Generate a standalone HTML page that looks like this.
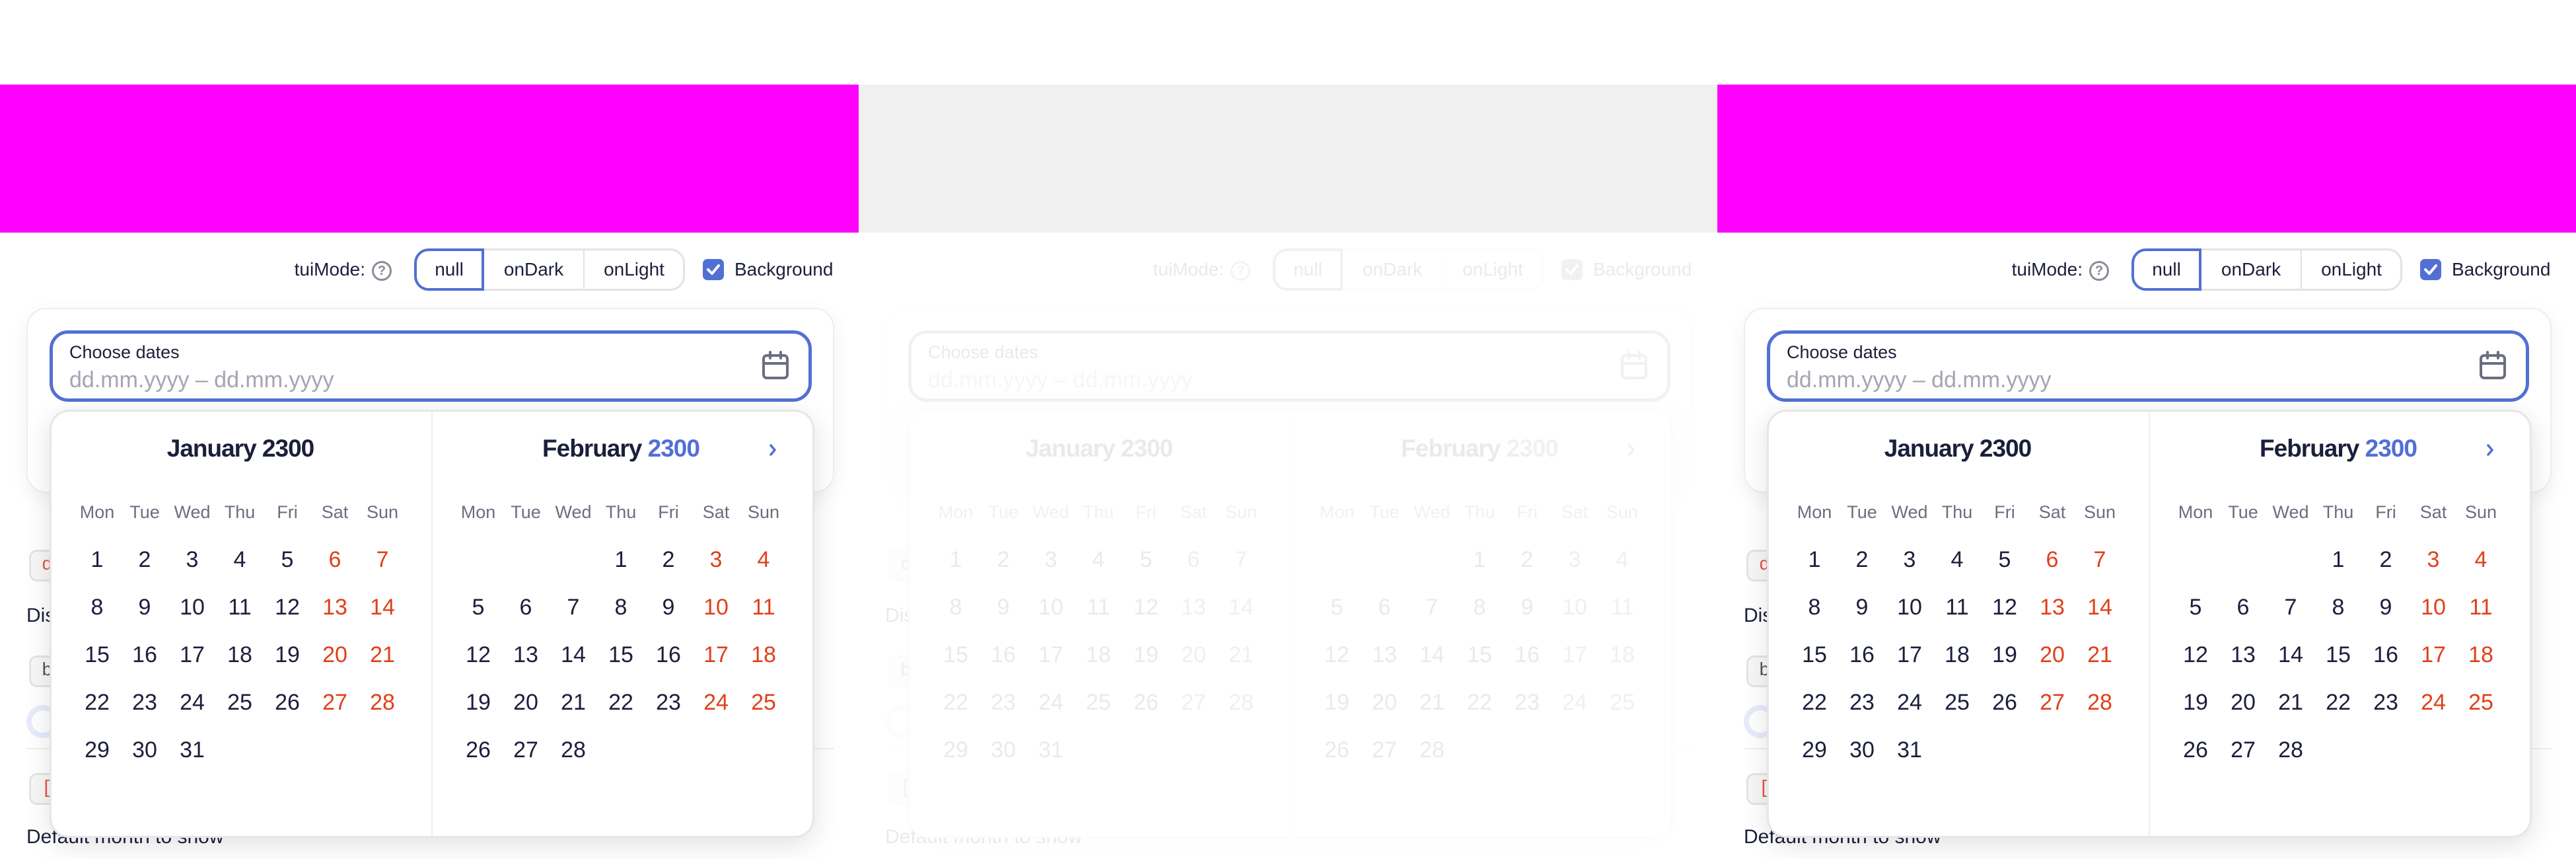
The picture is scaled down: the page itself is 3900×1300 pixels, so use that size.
<!DOCTYPE html>
<html><head><meta charset="utf-8">
<style>
*{box-sizing:border-box;margin:0;padding:0}
body{width:3900px;height:1300px;background:#fff;position:relative;overflow:hidden;font-family:"Liberation Sans",sans-serif;color:#1b1f3b}
.p{position:absolute;top:0;width:1300px;height:1300px;overflow:hidden}
.band{position:absolute;left:0;top:128px;width:1300px;height:224px;background:#ff00ff}
.a{position:absolute;white-space:nowrap}
.c{transform:translateX(-50%);text-align:center}
.seg{position:absolute;left:627px;top:376px;width:410px;height:64px;border:3px solid #e3e3e3;border-radius:22px}
.card{position:absolute;left:40px;top:466px;width:1223px;height:280px;border:2px solid #eee;border-radius:30px;background:#fff;box-shadow:0 8px 30px rgba(0,0,0,.06)}
.inp{position:absolute;left:75px;top:500px;width:1154px;height:108px;border:5px solid #5270d4;border-radius:28px;background:#fff}
.dd{position:absolute;left:75px;top:620px;width:1158px;height:648px;border:3px solid #e6e6e6;border-radius:30px;background:#fff;box-shadow:0 10px 40px rgba(0,0,0,.12)}
.chip{position:absolute;left:44px;height:48px;width:80px;border:3px solid #e4e4e4;border-radius:12px;background:#f7f7f7;font-family:"Liberation Mono",monospace;font-size:28px;line-height:42px;padding-left:16px;color:#e4553f}
.wd{font-size:27px;color:#6b6e80}
.dn{font-size:34px;color:#1b1f3b}
.we{color:#e0401a}
</style></head><body>
<div id="root"></div>
<script>
function panel(x,mid){
 var wd=['Mon','Tue','Wed','Thu','Fri','Sat','Sun'];
 var h='<div class="p" style="left:'+x+'px">';
 h+='<div class="band" style="'+(mid?'background:#f0f0f0':'')+'"></div>';
 h+='<div style="position:absolute;inset:0;'+(mid?'opacity:.09;filter:grayscale(1)':'')+'">';
 h+='<div class="chip" style="top:832px">d:</div>';
 h+='<div class="a" style="left:40px;top:915px;font-size:30px">Dis</div>';
 h+='<div class="chip" style="top:992px;color:#555">bo</div>';
 h+='<div style="position:absolute;left:40px;top:1067px;width:50px;height:50px;border:8px solid #e8ebfb;border-radius:50%"></div>';
 h+='<div style="position:absolute;left:40px;top:1132px;width:1223px;height:2px;background:#eee"></div>';
 h+='<div class="chip" style="top:1170px">[(</div>';
 h+='<div class="a" style="left:40px;top:1250px;font-size:30px">Default month to show</div>';
 h+='<div class="a" style="right:747px;top:392px;font-size:28px">tuiMode:</div>';
 h+='<div style="position:absolute;left:563px;top:395px;width:30px;height:30px;border:3px solid #8a8c99;border-radius:50%;color:#8a8c99;font-size:20px;font-weight:bold;text-align:center;line-height:25px">?</div>';
 h+='<div class="seg"></div>';
 h+='<div style="position:absolute;left:627px;top:376px;width:106px;height:64px;border:4px solid #5270d4;border-radius:22px 0 0 22px"></div>';
 h+='<div style="position:absolute;left:883px;top:379px;width:2px;height:58px;background:#e3e3e3"></div>';
 h+='<div class="a c" style="left:680px;top:392px;font-size:28px">null</div>';
 h+='<div class="a c" style="left:808px;top:392px;font-size:28px">onDark</div>';
 h+='<div class="a c" style="left:960px;top:392px;font-size:28px">onLight</div>';
 h+='<div style="position:absolute;left:1064px;top:392px;width:32px;height:32px;border-radius:7px;background:#5270d4"><svg width="32" height="32" viewBox="0 0 32 32"><path d="M8 16l6 6 10-12" stroke="#fff" stroke-width="4" fill="none" stroke-linecap="round" stroke-linejoin="round"/></svg></div>';
 h+='<div class="a" style="left:1112px;top:392px;font-size:28px">Background</div>';
 h+='<div class="card"></div><div class="inp"></div>';
 h+='<div class="a" style="left:105px;top:518px;font-size:27px">Choose dates</div>';
 h+='<div class="a" style="left:105px;top:556px;font-size:34px;color:#a3a5b3">dd.mm.yyyy – dd.mm.yyyy</div>';
 h+='<svg style="position:absolute;left:1152px;top:530px" width="44" height="46" viewBox="0 0 44 46"><rect x="4" y="8" width="36" height="34" rx="5" stroke="#6b6e80" stroke-width="4" fill="none"/><path d="M4 20h36M14 3v9M30 3v9" stroke="#6b6e80" stroke-width="4" stroke-linecap="round"/></svg>';
 h+='<div class="dd"></div><div style="position:absolute;left:653px;top:623px;width:2px;height:642px;background:#eee"></div>';
 h+='<div class="a c" style="left:364px;top:658px;font-size:37px;font-weight:bold;letter-spacing:-1px">January 2300</div>';
 h+='<div class="a c" style="left:940px;top:658px;font-size:37px;font-weight:bold;letter-spacing:-1px">February <span style="color:#5270d4">2300</span></div>';
 h+='<svg style="position:absolute;left:1162px;top:670px" width="16" height="22" viewBox="0 0 16 22"><path d="M5 4l6 7-6 7" stroke="#5270d4" stroke-width="3.5" fill="none" stroke-linecap="round" stroke-linejoin="round"/></svg>';
 function month(x0,start,n){
  for(var i=0;i<7;i++)h+='<div class="a c wd" style="left:'+(x0+i*72)+'px;top:760px">'+wd[i]+'</div>';
  for(var d=1;d<=n;d++){var k=start+d-1,col=k%7,row=Math.floor(k/7);
   h+='<div class="a c dn'+(col>=5?' we':'')+'" style="left:'+(x0+col*72)+'px;top:'+(828+row*72)+'px">'+d+'</div>';}
 }
 month(147,0,31);month(724,3,28);
 h+='</div></div>';return h;
}
document.getElementById('root').innerHTML=panel(0,0)+panel(1300,1)+panel(2600,0);
</script>
</body></html>
